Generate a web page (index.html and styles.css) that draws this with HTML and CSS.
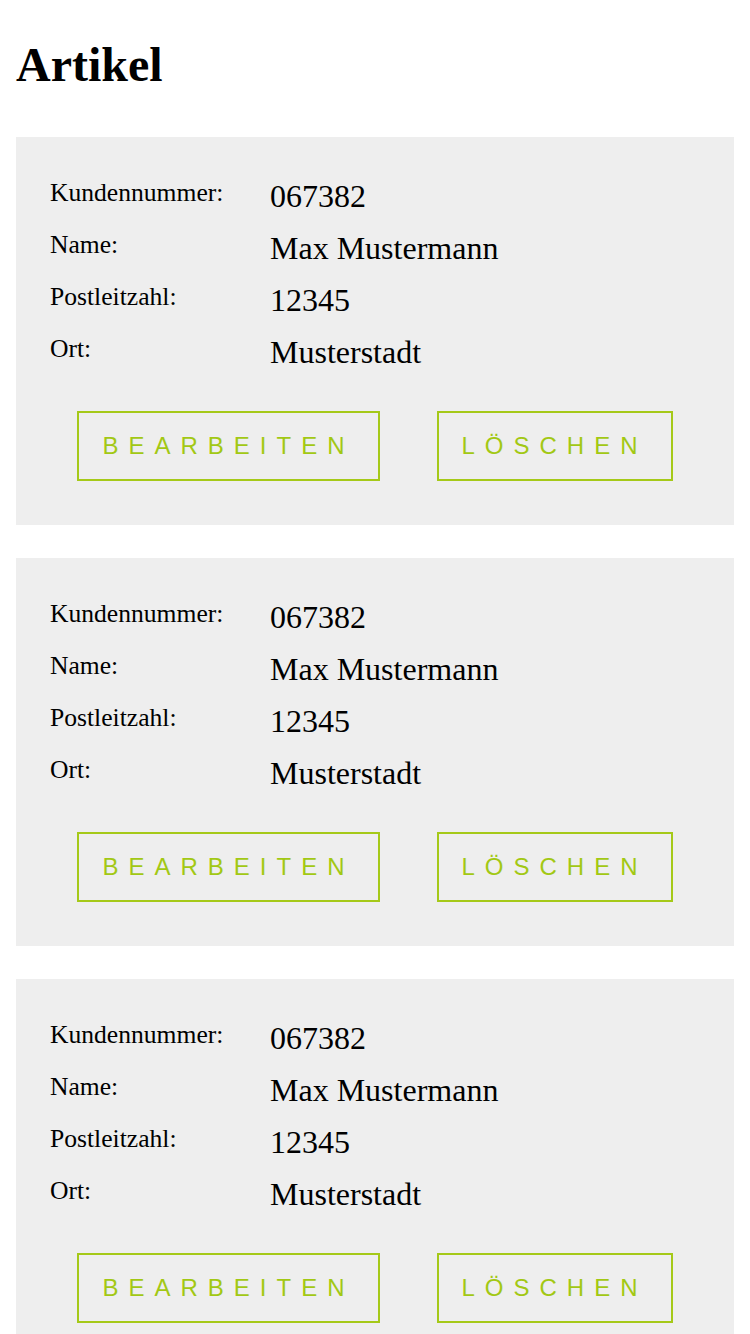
FILE: index.html
```html
<!DOCTYPE html>
<html lang="de">
<head>
<meta charset="utf-8">
<title>Artikel</title>
<link rel="stylesheet" href="styles.css">
</head>
<body>
<main class="page">
  <h1 class="title">Artikel</h1>

  <section class="card">
    <div class="fields">
      <div class="label">Kundennummer:</div><div class="value">067382</div>
      <div class="label">Name:</div><div class="value">Max Mustermann</div>
      <div class="label">Postleitzahl:</div><div class="value">12345</div>
      <div class="label">Ort:</div><div class="value">Musterstadt</div>
    </div>
    <div class="actions">
      <button class="btn">Bearbeiten</button>
      <button class="btn">Löschen</button>
    </div>
  </section>

  <section class="card">
    <div class="fields">
      <div class="label">Kundennummer:</div><div class="value">067382</div>
      <div class="label">Name:</div><div class="value">Max Mustermann</div>
      <div class="label">Postleitzahl:</div><div class="value">12345</div>
      <div class="label">Ort:</div><div class="value">Musterstadt</div>
    </div>
    <div class="actions">
      <button class="btn">Bearbeiten</button>
      <button class="btn">Löschen</button>
    </div>
  </section>

  <section class="card">
    <div class="fields">
      <div class="label">Kundennummer:</div><div class="value">067382</div>
      <div class="label">Name:</div><div class="value">Max Mustermann</div>
      <div class="label">Postleitzahl:</div><div class="value">12345</div>
      <div class="label">Ort:</div><div class="value">Musterstadt</div>
    </div>
    <div class="actions">
      <button class="btn">Bearbeiten</button>
      <button class="btn">Löschen</button>
    </div>
  </section>
</main>
</body>
</html>
```

FILE: styles.css
```css
html, body {
  margin: 0;
  padding: 0;
  background: #ffffff;
}

body {
  font-family: "Liberation Serif", "Times New Roman", serif;
  color: #000000;
}

.page {
  padding: 0 16px;
}

.title {
  font-family: "Liberation Serif", "Times New Roman", serif;
  font-weight: bold;
  font-size: 48px;
  line-height: 56px;
  margin: 37px 0 44px;
}

.card {
  background: #eeeeee;
  padding: 41px 34px 44px;
  margin-bottom: 33px;
}

.fields {
  display: grid;
  grid-template-columns: 220px 1fr;
  grid-auto-rows: 36px;
  row-gap: 16px;
  align-items: start;
}

.label {
  font-size: 25.6px;
  line-height: 1.15;
}

.value {
  font-size: 32px;
  line-height: 36px;
}

.actions {
  display: flex;
  justify-content: center;
  gap: 57px;
  margin-top: 41px;
}

.btn {
  font-family: "Liberation Sans", Arial, sans-serif;
  font-size: 24px;
  line-height: 28px;
  letter-spacing: 10px;
  text-transform: uppercase;
  color: #a2c814;
  background: transparent;
  border: 2px solid #a5c918;
  padding: 19px 23px;
  margin: 0;
  border-radius: 0;
  cursor: pointer;
}
```
